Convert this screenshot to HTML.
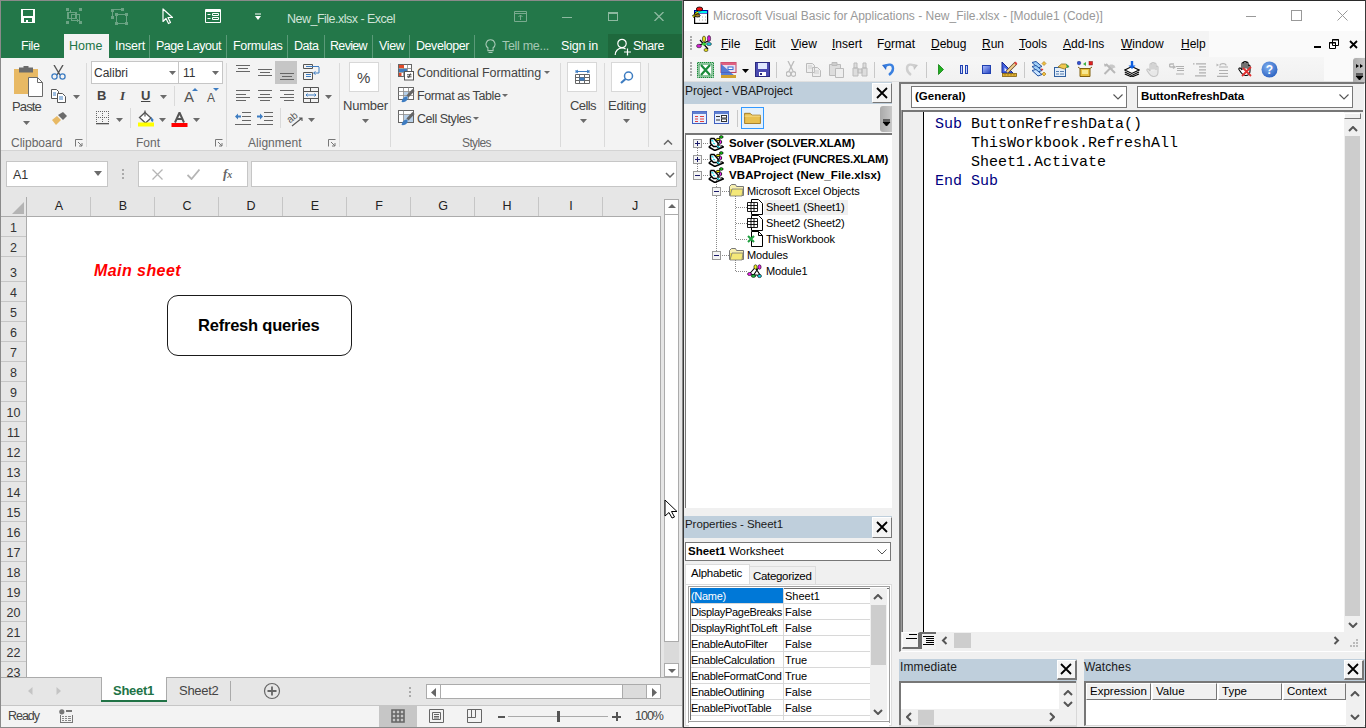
<!DOCTYPE html>
<html><head><meta charset="utf-8">
<style>
*{margin:0;padding:0;box-sizing:border-box}
html,body{width:1366px;height:728px;overflow:hidden;background:#8a8a8a;font-family:"Liberation Sans",sans-serif;font-size:12px;color:#262626}
.a{position:absolute}
.t{position:absolute;white-space:nowrap;line-height:1}
#xl{position:absolute;left:1px;top:1px;width:681px;height:726px;background:#f3f3f3;overflow:hidden}
#vba{position:absolute;left:684px;top:1px;width:682px;height:727px;background:#f0f0f0;overflow:hidden}
</style></head><body>
<div id="xl">
  <!-- green title + tabs -->
  <div class="a" style="left:0;top:0;width:681px;height:57px;background:#237749"></div>
  <div class="a" style="left:607px;top:33px;width:74px;height:24px;background:#1e683c"></div>
  <!-- QAT icons -->
  <svg class="a" style="left:20px;top:8px" width="14" height="14" viewBox="0 0 14 14" shape-rendering="crispEdges"><path d="M0 0h14v14h-14z" fill="#fff"/><path d="M2 1h10v6h-10z" fill="#237749"/><path d="M3 9h8v4h-8z" fill="#237749"/><path d="M5 11h2v2h-2z" fill="#fff"/></svg>
  <svg class="a" style="left:65px;top:7px" width="16" height="16" viewBox="0 0 16 16" shape-rendering="crispEdges"><g fill="#6aa383"><rect x="0" y="0" width="3" height="3"/><rect x="13" y="0" width="3" height="3"/><rect x="0" y="13" width="3" height="3"/><rect x="13" y="13" width="3" height="3"/></g><path d="M2 4.5h8v6h-8z M5.5 6.5h8v6h-8z M4.5 2v3 M11.5 11v3" fill="none" stroke="#6aa383" stroke-width="1.4"/></svg>
  <svg class="a" style="left:110px;top:7px" width="17" height="17" viewBox="0 0 17 17" shape-rendering="crispEdges"><g fill="#6aa383"><rect x="0" y="1" width="3" height="3"/><rect x="10" y="0" width="3" height="3"/><rect x="0" y="8" width="3" height="3"/><rect x="4" y="5" width="3" height="3"/><rect x="14" y="5" width="3" height="3"/><rect x="14" y="14" width="3" height="3"/><rect x="4" y="14" width="3" height="3"/></g><path d="M1.5 3v6 M2 1.5h9 M5.5 7v8 M6 6.5h9 M15.5 7v8 M6 15.5h9" fill="none" stroke="#6aa383" stroke-width="1.4"/></svg>
  <svg class="a" style="left:161px;top:7px" width="11" height="17" viewBox="0 0 11 17"><path d="M1 1v12.5l3-3 2.5 5 2-1-2.5-5h4.5z" fill="#237749" stroke="#fff" stroke-width="1.2" stroke-linejoin="round"/></svg>
  <svg class="a" style="left:204px;top:8px" width="17" height="15" viewBox="0 0 17 15"><path d="M0.5 0.5h15v13h-15z" fill="none" stroke="#fff"/><path d="M0.5 2h15" stroke="#fff" stroke-width="2"/><path d="M2.5 5.5h3 M2.5 9.5h3" stroke="#fff"/><path d="M7.5 4.5h6v2h-6z M7.5 8.5h6v2h-6z" fill="none" stroke="#fff"/></svg>
  <svg class="a" style="left:253px;top:12px" width="8" height="8" viewBox="0 0 8 8"><path d="M1 1h6" stroke="#fff"/><path d="M1 3h6l-3 4z" fill="#fff"/></svg>
  <div class="t" style="left:286px;top:12px;font-size:12.5px;color:#d0e3d8;letter-spacing:-0.513px">New_File.xlsx - Excel</div>
  <!-- window buttons -->
  <svg class="a" style="left:513px;top:10px" width="13" height="11" viewBox="0 0 13 11"><path d="M0.5 0.5h12v10h-12z M0.5 2.5h12" fill="none" stroke="#7aab8f"/><path d="M6.5 4v5 M4.5 6l2-2 2 2" fill="none" stroke="#7aab8f"/></svg>
  <div class="a" style="left:561px;top:16px;width:10px;height:1px;background:#8db9a0"></div>
  <div class="a" style="left:607px;top:11px;width:10px;height:9px;border:1px solid #8db9a0;border-top-width:2px"></div>
  <svg class="a" style="left:653px;top:11px" width="10" height="9" viewBox="0 0 10 9"><path d="M0.5 0l9 9 M9.5 0l-9 9" stroke="#8db9a0" stroke-width="1.3"/></svg>
  <!-- tabs -->
  <div class="a" style="left:63px;top:33px;width:45px;height:25px;background:#f3f3f3"></div>
  <div class="t" style="left:20px;top:39px;font-size:12.5px;color:#fff;letter-spacing:-0.414px">File</div>
  <div class="t" style="left:68px;top:39px;font-size:12.5px;color:#217346;letter-spacing:0.039px">Home</div>
  <div class="t" style="left:114px;top:39px;font-size:12.5px;color:#fff;letter-spacing:-0.211px">Insert</div>
  <div class="a" style="left:148px;top:34px;width:1px;height:23px;background:#5a9a78"></div>
  <div class="t" style="left:155px;top:39px;font-size:12.5px;color:#fff;letter-spacing:-0.473px">Page Layout</div>
  <div class="a" style="left:225px;top:34px;width:1px;height:23px;background:#5a9a78"></div>
  <div class="t" style="left:232px;top:39px;font-size:12.5px;color:#fff;letter-spacing:-0.324px">Formulas</div>
  <div class="a" style="left:286px;top:34px;width:1px;height:23px;background:#5a9a78"></div>
  <div class="t" style="left:293px;top:39px;font-size:12.5px;color:#fff;letter-spacing:-0.477px">Data</div>
  <div class="a" style="left:323px;top:34px;width:1px;height:23px;background:#5a9a78"></div>
  <div class="t" style="left:329px;top:39px;font-size:12.5px;color:#fff;letter-spacing:-0.667px">Review</div>
  <div class="a" style="left:371px;top:34px;width:1px;height:23px;background:#5a9a78"></div>
  <div class="t" style="left:378px;top:39px;font-size:12.5px;color:#fff;letter-spacing:-0.344px">View</div>
  <div class="a" style="left:408px;top:34px;width:1px;height:23px;background:#5a9a78"></div>
  <div class="t" style="left:415px;top:39px;font-size:12.5px;color:#fff;letter-spacing:-0.443px">Developer</div>
  <div class="a" style="left:473px;top:34px;width:1px;height:23px;background:#5a9a78"></div>
  <svg class="a" style="left:484px;top:38px" width="11" height="16" viewBox="0 0 11 16"><path d="M5.5 0.8a4.4 4.4 0 0 0-2.6 8v2.8h5.2v-2.8a4.4 4.4 0 0 0-2.6-8z M3.5 13.5h4" fill="none" stroke="#a6c8b5" stroke-width="1.1"/></svg>
  <div class="t" style="left:501px;top:39px;font-size:12.5px;color:#a6c8b5;letter-spacing:-0.302px">Tell me...</div>
  <div class="t" style="left:560px;top:39px;font-size:12.5px;color:#fff;letter-spacing:-0.176px">Sign in</div>
  <svg class="a" style="left:613px;top:37px" width="18" height="18" viewBox="0 0 18 18"><circle cx="8" cy="5.5" r="4.2" fill="none" stroke="#fff" stroke-width="1.2"/><path d="M1.2 17c0-4 3-7 6.8-7 1.4 0 2.6 0.3 3.6 1" fill="none" stroke="#fff" stroke-width="1.2"/><path d="M13.5 10.5v7 M10 14h7" stroke="#fff" stroke-width="1.2"/></svg>
  <div class="t" style="left:632px;top:39px;font-size:12.5px;color:#fff;letter-spacing:-0.472px">Share</div>

  <!-- ribbon -->
  <div class="a" style="left:0;top:57px;width:681px;height:92px;background:#f3f3f3"></div>
  <div class="a" style="left:0;top:149px;width:681px;height:1px;background:#d4d4d4"></div>
  <!-- clipboard -->
  <svg class="a" style="left:13px;top:65px" width="30" height="32" viewBox="0 0 30 32"><path d="M0 3h24v25h-24z" fill="#e8b964"/><path d="M5 1.5h14v5h-14z" fill="#6b6b6b"/><path d="M9.5 0h5v3h-5z" fill="#6b6b6b"/><path d="M14.5 11.5h9l5 5v14h-14z" fill="#fff" stroke="#6b6b6b"/><path d="M23.5 11.5v5h5" fill="none" stroke="#6b6b6b"/></svg>
  <div class="t" style="left:11px;top:99px;font-size:13px;color:#444;letter-spacing:-0.850px">Paste</div>
  <svg class="a" style="left:22px;top:120px" width="7" height="4"><path d="M0 0h7l-3.5 4z" fill="#6b6b6b"/></svg>
  <svg class="a" style="left:50px;top:64px" width="15" height="15" viewBox="0 0 15 15"><path d="M3 0l6 10 M12 0l-6 10" stroke="#555" stroke-width="1.4"/><circle cx="3.5" cy="11.5" r="2.6" fill="none" stroke="#3d7cc1" stroke-width="1.3"/><circle cx="11.5" cy="11.5" r="2.6" fill="none" stroke="#3d7cc1" stroke-width="1.3"/></svg>
  <svg class="a" style="left:50px;top:88px" width="15" height="14" viewBox="0 0 15 14"><path d="M0.5 0.5h5l2 2v7h-7z" fill="#fff" stroke="#555"/><path d="M6.5 4.5h5l3 3v6h-8z" fill="#fff" stroke="#555"/><path d="M8 8h4 M8 10h4 M2 4h3 M2 6h3" stroke="#3d7cc1"/></svg>
  <svg class="a" style="left:72px;top:94px" width="7" height="4"><path d="M0 0h7l-3.5 4z" fill="#6b6b6b"/></svg>
  <svg class="a" style="left:51px;top:111px" width="15" height="13" viewBox="0 0 15 13"><path d="M0 8l5-4 4 4-5 5z" fill="#e8b964"/><path d="M6 3l5-3 4 4-4 4z" fill="#6b6b6b"/></svg>
  <div class="t" style="left:10px;top:136px;font-size:12px;color:#666">Clipboard</div>
  <svg class="a" style="left:74px;top:138px" width="8" height="8" viewBox="0 0 8 8"><path d="M0.5 7.5v-7h7" fill="none" stroke="#777"/><path d="M3 3l4 4 M7 4v3h-3" fill="none" stroke="#777"/></svg>
  <div class="a" style="left:85px;top:62px;width:1px;height:84px;background:#dadada"></div>
  <!-- font -->
  <div class="a" style="left:90px;top:60px;width:88px;height:23px;background:#fff;border:1px solid #c6c6c6"></div>
  <div class="t" style="left:93px;top:66px;font-size:12px;color:#333;letter-spacing:-0.002px">Calibri</div>
  <svg class="a" style="left:168px;top:70px" width="7" height="4"><path d="M0 0h7l-3.5 4z" fill="#6b6b6b"/></svg>
  <div class="a" style="left:177px;top:60px;width:45px;height:23px;background:#fff;border:1px solid #c6c6c6"></div>
  <div class="t" style="left:182px;top:66px;font-size:12px;color:#333">11</div>
  <svg class="a" style="left:211px;top:70px" width="7" height="4"><path d="M0 0h7l-3.5 4z" fill="#6b6b6b"/></svg>
  <div class="t" style="left:96px;top:88px;font-size:13px;font-weight:bold;color:#444">B</div>
  <div class="t" style="left:119px;top:88px;font-size:13px;font-style:italic;font-family:'Liberation Serif';font-weight:bold;color:#444">I</div>
  <div class="t" style="left:140px;top:88px;font-size:13px;font-weight:bold;color:#444;text-decoration:underline">U</div>
  <svg class="a" style="left:159px;top:94px" width="7" height="4"><path d="M0 0h7l-3.5 4z" fill="#6b6b6b"/></svg>
  <div class="a" style="left:173px;top:85px;width:1px;height:20px;background:#dadada"></div>
  <div class="t" style="left:183px;top:88px;font-size:15px;color:#555">A</div>
  <svg class="a" style="left:191px;top:87px" width="6" height="3"><path d="M0 3h6l-3-3z" fill="#3d7cc1"/></svg>
  <div class="t" style="left:206px;top:91px;font-size:12px;color:#555">A</div>
  <svg class="a" style="left:212px;top:87px" width="6" height="3"><path d="M0 0h6l-3 3z" fill="#3d7cc1"/></svg>
  <svg class="a" style="left:95px;top:110px" width="14" height="14" viewBox="0 0 14 14"><g fill="#666"><rect x="0" y="0" width="1" height="1"/><rect x="2" y="0" width="1" height="1"/><rect x="4" y="0" width="1" height="1"/><rect x="6" y="0" width="1" height="1"/><rect x="8" y="0" width="1" height="1"/><rect x="10" y="0" width="1" height="1"/><rect x="12" y="0" width="1" height="1"/><rect x="0" y="6" width="1" height="1"/><rect x="2" y="6" width="1" height="1"/><rect x="4" y="6" width="1" height="1"/><rect x="6" y="6" width="1" height="1"/><rect x="8" y="6" width="1" height="1"/><rect x="10" y="6" width="1" height="1"/><rect x="12" y="6" width="1" height="1"/><rect x="0" y="2" width="1" height="1"/><rect x="0" y="4" width="1" height="1"/><rect x="0" y="8" width="1" height="1"/><rect x="0" y="10" width="1" height="1"/><rect x="6" y="2" width="1" height="1"/><rect x="6" y="4" width="1" height="1"/><rect x="6" y="8" width="1" height="1"/><rect x="6" y="10" width="1" height="1"/><rect x="12" y="2" width="1" height="1"/><rect x="12" y="4" width="1" height="1"/><rect x="12" y="8" width="1" height="1"/><rect x="12" y="10" width="1" height="1"/></g><rect x="0" y="12" width="13" height="1.3" fill="#555"/></svg>
  <svg class="a" style="left:115px;top:117px" width="7" height="4"><path d="M0 0h7l-3.5 4z" fill="#6b6b6b"/></svg>
  <div class="a" style="left:129px;top:107px;width:1px;height:20px;background:#dadada"></div>
  <svg class="a" style="left:137px;top:109px" width="17" height="18" viewBox="0 0 17 18"><path d="M7 2.5l6 5.5-5.5 5-6-5.5z" fill="#fff" stroke="#555" stroke-width="1.3"/><path d="M7 0.5v6" stroke="#555" stroke-width="1.2"/><path d="M13 7l2.5 2.5-0.5 2.5-2-1z" fill="#3d7cc1"/><rect x="0" y="12.5" width="16" height="4" fill="#ffff00"/></svg>
  <svg class="a" style="left:158px;top:117px" width="7" height="4"><path d="M0 0h7l-3.5 4z" fill="#6b6b6b"/></svg>
  <svg class="a" style="left:170px;top:111px" width="17" height="16" viewBox="0 0 17 16"><path d="M4 10.5l4.5-10 4.5 10 M5.5 7h6" fill="none" stroke="#555" stroke-width="2"/><rect x="0.5" y="11" width="16" height="4" fill="#ff0000"/></svg>
  <svg class="a" style="left:192px;top:117px" width="7" height="4"><path d="M0 0h7l-3.5 4z" fill="#6b6b6b"/></svg>
  <div class="t" style="left:135px;top:136px;font-size:12px;color:#666;letter-spacing:-0.004px">Font</div>
  <svg class="a" style="left:214px;top:138px" width="8" height="8" viewBox="0 0 8 8"><path d="M0.5 7.5v-7h7" fill="none" stroke="#777"/><path d="M3 3l4 4 M7 4v3h-3" fill="none" stroke="#777"/></svg>
  <div class="a" style="left:225px;top:62px;width:1px;height:84px;background:#dadada"></div>
  <!-- alignment -->
  <svg class="a" style="left:235px;top:64px" width="15" height="8"><path d="M0 0.5h14 M2 3.5h10 M0 6.5h14" stroke="#666"/></svg>
  <svg class="a" style="left:257px;top:68px" width="15" height="8"><path d="M0 0.5h14 M2 3.5h10 M0 6.5h14" stroke="#666"/></svg>
  <div class="a" style="left:274px;top:60px;width:22px;height:23px;background:#c6c6c6"></div>
  <svg class="a" style="left:279px;top:72px" width="15" height="8"><path d="M0 0.5h14 M2 3.5h10 M0 6.5h14" stroke="#666"/></svg>
  <svg class="a" style="left:302px;top:63px" width="18" height="17" viewBox="0 0 18 17"><path d="M0.5 0.5h9v4h-9z M0.5 8.5h9v7h-9z" fill="none" stroke="#555"/><path d="M3 2.5h13 M3 10.5h5 M3 12.5h5" stroke="#3d7cc1"/><path d="M16 3v6h-5 M12.5 7.5l-2 1.5 2 1.5" fill="none" stroke="#3d7cc1"/></svg>
  <svg class="a" style="left:234px;top:88px" width="16" height="13"><path d="M1 1.5h14 M1 5.5h10 M1 8.5h14 M1 11.5h10" stroke="#666"/></svg>
  <svg class="a" style="left:256px;top:88px" width="16" height="13"><path d="M1 1.5h14 M3 5.5h10 M1 8.5h14 M3 11.5h10" stroke="#666"/></svg>
  <svg class="a" style="left:278px;top:88px" width="16" height="13"><path d="M1 1.5h14 M5 5.5h10 M1 8.5h14 M5 11.5h10" stroke="#666"/></svg>
  <svg class="a" style="left:302px;top:86px" width="17" height="16" viewBox="0 0 17 16"><path d="M0.5 0.5h15v15h-15z M0.5 4.5h15 M0.5 11.5h15 M7.5 0.5v4 M7.5 11.5v4" fill="none" stroke="#555"/><path d="M3 8h10 M4.5 6.5l-1.5 1.5 1.5 1.5 M11.5 6.5l1.5 1.5-1.5 1.5" fill="none" stroke="#3d7cc1"/></svg>
  <svg class="a" style="left:324px;top:94px" width="7" height="4"><path d="M0 0h7l-3.5 4z" fill="#6b6b6b"/></svg>
  <svg class="a" style="left:233px;top:110px" width="18" height="15" viewBox="0 0 18 15"><path d="M8 1.5h9 M8 5.5h9 M8 9.5h9 M1 13.5h16" stroke="#666"/><path d="M1 5.5l3-3v2h3v2h-3v2z" fill="#3d7cc1"/></svg>
  <svg class="a" style="left:255px;top:110px" width="18" height="15" viewBox="0 0 18 15"><path d="M8 1.5h9 M8 5.5h9 M8 9.5h9 M1 13.5h16" stroke="#666"/><path d="M7 5.5l-3-3v2h-3v2h3v2z" fill="#3d7cc1"/></svg>
  <div class="a" style="left:279px;top:107px;width:1px;height:20px;background:#dadada"></div>
  <svg class="a" style="left:286px;top:109px" width="18" height="17" viewBox="0 0 18 17"><text x="0" y="11" font-size="10" font-family="Liberation Sans" fill="#555" transform="rotate(-40 5 8)">ab</text><path d="M5 16l10-8 M12 8h3v3" fill="none" stroke="#555" stroke-width="1.1"/></svg>
  <svg class="a" style="left:307px;top:117px" width="7" height="4"><path d="M0 0h7l-3.5 4z" fill="#6b6b6b"/></svg>
  <div class="t" style="left:247px;top:136px;font-size:12px;color:#666;letter-spacing:0.014px">Alignment</div>
  <svg class="a" style="left:327px;top:138px" width="8" height="8" viewBox="0 0 8 8"><path d="M0.5 7.5v-7h7" fill="none" stroke="#777"/><path d="M3 3l4 4 M7 4v3h-3" fill="none" stroke="#777"/></svg>
  <div class="a" style="left:338px;top:62px;width:1px;height:84px;background:#dadada"></div>
  <!-- number -->
  <div class="a" style="left:348px;top:61px;width:30px;height:30px;background:#fff;border:1px solid #d8d8d8"></div>
  <div class="t" style="left:356px;top:69px;font-size:15px;color:#444">%</div>
  <div class="t" style="left:342px;top:98px;font-size:13px;color:#444;letter-spacing:-0.208px">Number</div>
  <svg class="a" style="left:361px;top:118px" width="7" height="4"><path d="M0 0h7l-3.5 4z" fill="#6b6b6b"/></svg>
  <div class="a" style="left:389px;top:62px;width:1px;height:84px;background:#dadada"></div>
  <!-- styles -->
  <svg class="a" style="left:397px;top:63px" width="17" height="17" viewBox="0 0 17 17"><rect x="0.5" y="0.5" width="13" height="12" fill="#fff" stroke="#666"/><path d="M0.5 4.5h13 M0.5 8.5h13 M5.5 0.5v12 M9.5 0.5v12" stroke="#888" stroke-width="0.8"/><rect x="1" y="1" width="5" height="3" fill="#e04a2a"/><rect x="1" y="5" width="8" height="3" fill="#3d7cc1"/><rect x="1" y="9" width="2.5" height="3" fill="#e04a2a"/><rect x="6.5" y="7.5" width="9" height="8.5" fill="#fff" stroke="#555"/><path d="M9 10.8h4.5 M9 12.8h4.5 M12.5 9.5l-2 4.5" stroke="#333" stroke-width="0.9"/></svg>
  <div class="t" style="left:416px;top:66px;font-size:12.5px;color:#444;letter-spacing:-0.080px">Conditional Formatting</div>
  <svg class="a" style="left:543px;top:70px" width="6" height="3"><path d="M0 0h6l-3 3z" fill="#6b6b6b"/></svg>
  <svg class="a" style="left:397px;top:86px" width="17" height="17" viewBox="0 0 17 17"><rect x="0.5" y="0.5" width="15" height="12" fill="#fff" stroke="#666"/><path d="M0.5 4.5h15 M0.5 8.5h15 M5.5 0.5v12 M10.5 0.5v12" stroke="#888" stroke-width="0.8"/><rect x="6" y="5" width="4" height="3" fill="#b7cfe7"/><rect x="6" y="9" width="4" height="3" fill="#b7cfe7"/><path d="M15.5 3l-6 6.5" stroke="#666" stroke-width="3"/><path d="M9.5 9.5c-2-0.5-4 1-5 2.5l-1 3c2 0.5 5-0.5 6-2.5z" fill="#3d7cc1"/></svg>
  <div class="t" style="left:416px;top:89px;font-size:12.5px;color:#444;letter-spacing:-0.394px">Format as Table</div>
  <svg class="a" style="left:501px;top:93px" width="6" height="3"><path d="M0 0h6l-3 3z" fill="#6b6b6b"/></svg>
  <svg class="a" style="left:397px;top:109px" width="17" height="17" viewBox="0 0 17 17"><rect x="0.5" y="0.5" width="15" height="12" fill="#fff" stroke="#666"/><path d="M0.5 4.5h15 M5.5 0.5v12" stroke="#888" stroke-width="0.8"/><rect x="6" y="5" width="9" height="7" fill="#b7cfe7"/><path d="M15.5 3l-6 6.5" stroke="#666" stroke-width="3"/><path d="M9.5 9.5c-2-0.5-4 1-5 2.5l-1 3c2 0.5 5-0.5 6-2.5z" fill="#3d7cc1"/></svg>
  <div class="t" style="left:416px;top:112px;font-size:12.5px;color:#444;letter-spacing:-0.459px">Cell Styles</div>
  <svg class="a" style="left:472px;top:116px" width="6" height="3"><path d="M0 0h6l-3 3z" fill="#6b6b6b"/></svg>
  <div class="t" style="left:461px;top:136px;font-size:12px;color:#666;letter-spacing:-0.615px">Styles</div>
  <div class="a" style="left:559px;top:62px;width:1px;height:84px;background:#dadada"></div>
  <!-- cells -->
  <div class="a" style="left:566px;top:61px;width:30px;height:30px;background:#fff;border:1px solid #d8d8d8"></div>
  <svg class="a" style="left:574px;top:68px" width="15" height="16" viewBox="0 0 15 16"><path d="M1 2.5h13 M1 1v3 M14 1v3 M3 1l-2 1.5 2 1.5 M12 1l2 1.5-2 1.5" fill="none" stroke="#3d7cc1"/><path d="M0.5 5.5h14v9h-14z M0.5 8.5h14 M0.5 11.5h14 M4.5 5.5v9 M9.5 5.5v9" fill="none" stroke="#666"/><rect x="4.5" y="8.5" width="5" height="3" fill="#3d7cc1"/></svg>
  <div class="t" style="left:569px;top:98px;font-size:13px;color:#444;letter-spacing:-0.581px">Cells</div>
  <svg class="a" style="left:579px;top:118px" width="7" height="4"><path d="M0 0h7l-3.5 4z" fill="#6b6b6b"/></svg>
  <div class="a" style="left:603px;top:62px;width:1px;height:84px;background:#dadada"></div>
  <!-- editing -->
  <div class="a" style="left:610px;top:61px;width:30px;height:30px;background:#fff;border:1px solid #d8d8d8"></div>
  <svg class="a" style="left:619px;top:70px" width="14" height="13" viewBox="0 0 14 13"><circle cx="8.5" cy="5" r="4" fill="none" stroke="#3d7cc1" stroke-width="1.5"/><path d="M5.5 8l-4.5 4" stroke="#3d7cc1" stroke-width="2.2"/></svg>
  <div class="t" style="left:607px;top:98px;font-size:13px;color:#444;letter-spacing:-0.250px">Editing</div>
  <svg class="a" style="left:622px;top:118px" width="7" height="4"><path d="M0 0h7l-3.5 4z" fill="#6b6b6b"/></svg>
  <div class="a" style="left:647px;top:62px;width:1px;height:84px;background:#dadada"></div>
  <svg class="a" style="left:662px;top:138px" width="10" height="6"><path d="M1 5.5l4-4 4 4" fill="none" stroke="#666" stroke-width="1.5"/></svg>

  <!-- formula bar area -->
  <div class="a" style="left:0;top:150px;width:681px;height:46px;background:#e6e6e6"></div>
  <div class="a" style="left:5px;top:160px;width:102px;height:26px;background:#fff;border:1px solid #c6c6c6"></div>
  <div class="t" style="left:12px;top:168px;font-size:12.5px;color:#333">A1</div>
  <svg class="a" style="left:93px;top:170px" width="8" height="5"><path d="M0 0h8l-4 5z" fill="#6b6b6b"/></svg>
  <div class="a" style="left:121px;top:168px;width:2px;height:2px;background:#aaa"></div>
  <div class="a" style="left:121px;top:172px;width:2px;height:2px;background:#aaa"></div>
  <div class="a" style="left:121px;top:176px;width:2px;height:2px;background:#aaa"></div>
  <div class="a" style="left:137px;top:160px;width:110px;height:26px;background:#fff;border:1px solid #c6c6c6"></div>
  <svg class="a" style="left:151px;top:168px" width="11" height="11"><path d="M0.5 0.5l10 10 M10.5 0.5l-10 10" stroke="#b5b5b5" stroke-width="1.3"/></svg>
  <svg class="a" style="left:186px;top:168px" width="13" height="11"><path d="M0.5 6l4 4 8-9.5" fill="none" stroke="#b5b5b5" stroke-width="1.8"/></svg>
  <div class="t" style="left:222px;top:166px;font-size:13px;color:#666;font-family:'Liberation Serif';font-style:italic;font-weight:bold">f<span style="font-size:10px">x</span></div>
  <div class="a" style="left:250px;top:160px;width:426px;height:26px;background:#fff;border:1px solid #c6c6c6"></div>
  <svg class="a" style="left:664px;top:171px" width="10" height="6"><path d="M1 1l4 4 4-4" fill="none" stroke="#666" stroke-width="1.5"/></svg>

  <!-- column headers -->
  <div class="a" style="left:0;top:196px;width:681px;height:20px;background:#e6e6e6"></div>
  <svg class="a" style="left:11px;top:201px" width="12" height="12"><path d="M12 0v12h-12z" fill="#b4b4b4"/></svg>
  <div class="a" style="left:0;top:215px;width:660px;height:1px;background:#ababab"></div>
  <div class="a" style="left:89px;top:196px;width:1px;height:19px;background:#c6c6c6"></div>
<div class="t" style="left:26px;top:199px;width:64px;text-align:center;font-size:12.5px;color:#222">A</div>
<div class="a" style="left:153px;top:196px;width:1px;height:19px;background:#c6c6c6"></div>
<div class="t" style="left:90px;top:199px;width:64px;text-align:center;font-size:12.5px;color:#222">B</div>
<div class="a" style="left:217px;top:196px;width:1px;height:19px;background:#c6c6c6"></div>
<div class="t" style="left:154px;top:199px;width:64px;text-align:center;font-size:12.5px;color:#222">C</div>
<div class="a" style="left:281px;top:196px;width:1px;height:19px;background:#c6c6c6"></div>
<div class="t" style="left:218px;top:199px;width:64px;text-align:center;font-size:12.5px;color:#222">D</div>
<div class="a" style="left:345px;top:196px;width:1px;height:19px;background:#c6c6c6"></div>
<div class="t" style="left:282px;top:199px;width:64px;text-align:center;font-size:12.5px;color:#222">E</div>
<div class="a" style="left:409px;top:196px;width:1px;height:19px;background:#c6c6c6"></div>
<div class="t" style="left:346px;top:199px;width:64px;text-align:center;font-size:12.5px;color:#222">F</div>
<div class="a" style="left:473px;top:196px;width:1px;height:19px;background:#c6c6c6"></div>
<div class="t" style="left:410px;top:199px;width:64px;text-align:center;font-size:12.5px;color:#222">G</div>
<div class="a" style="left:537px;top:196px;width:1px;height:19px;background:#c6c6c6"></div>
<div class="t" style="left:474px;top:199px;width:64px;text-align:center;font-size:12.5px;color:#222">H</div>
<div class="a" style="left:601px;top:196px;width:1px;height:19px;background:#c6c6c6"></div>
<div class="t" style="left:538px;top:199px;width:64px;text-align:center;font-size:12.5px;color:#222">I</div>
<div class="a" style="left:665px;top:196px;width:1px;height:19px;background:#c6c6c6"></div>
<div class="t" style="left:602px;top:199px;width:64px;text-align:center;font-size:12.5px;color:#222">J</div>
  <!-- row header & cells -->
  <div class="a" style="left:0;top:216px;width:25px;height:461px;background:#e6e6e6"></div>
  <div class="a" style="left:25px;top:196px;width:1px;height:481px;background:#ababab"></div>
  <div class="a" style="left:26px;top:216px;width:634px;height:461px;background:#fff"></div>
  <div class="a" style="left:659px;top:216px;width:1px;height:461px;background:#ababab"></div>
  <div class="a" style="left:0;top:235px;width:25px;height:1px;background:#c6c6c6"></div>
<div class="t" style="left:0;top:221px;width:25px;text-align:center;font-size:12.5px;color:#333">1</div>
<div class="a" style="left:0;top:255px;width:25px;height:1px;background:#c6c6c6"></div>
<div class="t" style="left:0;top:241px;width:25px;text-align:center;font-size:12.5px;color:#333">2</div>
<div class="a" style="left:0;top:280px;width:25px;height:1px;background:#c6c6c6"></div>
<div class="t" style="left:0;top:266px;width:25px;text-align:center;font-size:12.5px;color:#333">3</div>
<div class="a" style="left:0;top:300px;width:25px;height:1px;background:#c6c6c6"></div>
<div class="t" style="left:0;top:286px;width:25px;text-align:center;font-size:12.5px;color:#333">4</div>
<div class="a" style="left:0;top:320px;width:25px;height:1px;background:#c6c6c6"></div>
<div class="t" style="left:0;top:306px;width:25px;text-align:center;font-size:12.5px;color:#333">5</div>
<div class="a" style="left:0;top:340px;width:25px;height:1px;background:#c6c6c6"></div>
<div class="t" style="left:0;top:326px;width:25px;text-align:center;font-size:12.5px;color:#333">6</div>
<div class="a" style="left:0;top:360px;width:25px;height:1px;background:#c6c6c6"></div>
<div class="t" style="left:0;top:346px;width:25px;text-align:center;font-size:12.5px;color:#333">7</div>
<div class="a" style="left:0;top:380px;width:25px;height:1px;background:#c6c6c6"></div>
<div class="t" style="left:0;top:366px;width:25px;text-align:center;font-size:12.5px;color:#333">8</div>
<div class="a" style="left:0;top:400px;width:25px;height:1px;background:#c6c6c6"></div>
<div class="t" style="left:0;top:386px;width:25px;text-align:center;font-size:12.5px;color:#333">9</div>
<div class="a" style="left:0;top:420px;width:25px;height:1px;background:#c6c6c6"></div>
<div class="t" style="left:0;top:406px;width:25px;text-align:center;font-size:12.5px;color:#333">10</div>
<div class="a" style="left:0;top:440px;width:25px;height:1px;background:#c6c6c6"></div>
<div class="t" style="left:0;top:426px;width:25px;text-align:center;font-size:12.5px;color:#333">11</div>
<div class="a" style="left:0;top:460px;width:25px;height:1px;background:#c6c6c6"></div>
<div class="t" style="left:0;top:446px;width:25px;text-align:center;font-size:12.5px;color:#333">12</div>
<div class="a" style="left:0;top:480px;width:25px;height:1px;background:#c6c6c6"></div>
<div class="t" style="left:0;top:466px;width:25px;text-align:center;font-size:12.5px;color:#333">13</div>
<div class="a" style="left:0;top:500px;width:25px;height:1px;background:#c6c6c6"></div>
<div class="t" style="left:0;top:486px;width:25px;text-align:center;font-size:12.5px;color:#333">14</div>
<div class="a" style="left:0;top:520px;width:25px;height:1px;background:#c6c6c6"></div>
<div class="t" style="left:0;top:506px;width:25px;text-align:center;font-size:12.5px;color:#333">15</div>
<div class="a" style="left:0;top:540px;width:25px;height:1px;background:#c6c6c6"></div>
<div class="t" style="left:0;top:526px;width:25px;text-align:center;font-size:12.5px;color:#333">16</div>
<div class="a" style="left:0;top:560px;width:25px;height:1px;background:#c6c6c6"></div>
<div class="t" style="left:0;top:546px;width:25px;text-align:center;font-size:12.5px;color:#333">17</div>
<div class="a" style="left:0;top:580px;width:25px;height:1px;background:#c6c6c6"></div>
<div class="t" style="left:0;top:566px;width:25px;text-align:center;font-size:12.5px;color:#333">18</div>
<div class="a" style="left:0;top:600px;width:25px;height:1px;background:#c6c6c6"></div>
<div class="t" style="left:0;top:586px;width:25px;text-align:center;font-size:12.5px;color:#333">19</div>
<div class="a" style="left:0;top:620px;width:25px;height:1px;background:#c6c6c6"></div>
<div class="t" style="left:0;top:606px;width:25px;text-align:center;font-size:12.5px;color:#333">20</div>
<div class="a" style="left:0;top:640px;width:25px;height:1px;background:#c6c6c6"></div>
<div class="t" style="left:0;top:626px;width:25px;text-align:center;font-size:12.5px;color:#333">21</div>
<div class="a" style="left:0;top:660px;width:25px;height:1px;background:#c6c6c6"></div>
<div class="t" style="left:0;top:646px;width:25px;text-align:center;font-size:12.5px;color:#333">22</div>
<div class="a" style="left:0;top:680px;width:25px;height:1px;background:#c6c6c6"></div>
<div class="t" style="left:0;top:666px;width:25px;text-align:center;font-size:12.5px;color:#333">23</div>
  <div class="t" style="left:93px;top:262px;font-size:16px;font-weight:bold;font-style:italic;color:#ff0000;letter-spacing:0.431px">Main sheet</div>
  <div class="a" style="left:166px;top:294px;width:185px;height:61px;border:1px solid #1a1a1a;border-radius:11px;background:#fff"></div>
  <div class="t" style="left:197px;top:316px;font-size:16.5px;font-weight:bold;color:#000;letter-spacing:-0.215px">Refresh queries</div>
  <!-- vertical scrollbar -->
  <div class="a" style="left:660px;top:196px;width:21px;height:481px;background:#e6e6e6"></div>
  <div class="a" style="left:663px;top:198px;width:15px;height:16px;background:#fff;border:1px solid #ababab"></div>
  <svg class="a" style="left:667px;top:203px" width="8" height="4"><path d="M0 4h8l-4-4z" fill="#666"/></svg>
  <div class="a" style="left:663px;top:213px;width:15px;height:428px;background:#fff;border:1px solid #ababab"></div>
  <div class="a" style="left:663px;top:641px;width:15px;height:21px;background:#dadada"></div>
  <div class="a" style="left:663px;top:662px;width:15px;height:14px;background:#fff;border:1px solid #ababab"></div>
  <svg class="a" style="left:667px;top:668px" width="8" height="4"><path d="M0 0h8l-4 4z" fill="#666"/></svg>
  <!-- sheet tab bar -->
  <div class="a" style="left:0;top:676px;width:681px;height:1px;background:#ababab"></div>
  <div class="a" style="left:0;top:677px;width:681px;height:27px;background:#e6e6e6"></div>
  <svg class="a" style="left:27px;top:686px" width="5" height="8"><path d="M4.5 0v8l-4.5-4z" fill="#c4c4c4"/></svg>
  <svg class="a" style="left:55px;top:686px" width="5" height="8"><path d="M0.5 0v8l4.5-4z" fill="#c4c4c4"/></svg>
  <div class="a" style="left:100px;top:676px;width:66px;height:25px;background:#fff;border-left:1px solid #ababab;border-right:1px solid #ababab"></div>
  <div class="a" style="left:100px;top:699px;width:66px;height:2px;background:#217346"></div>
  <div class="t" style="left:112px;top:683px;font-size:13px;font-weight:bold;color:#217346;letter-spacing:-0.273px">Sheet1</div>
  <div class="t" style="left:178px;top:683px;font-size:13px;color:#444;letter-spacing:-0.284px">Sheet2</div>
  <div class="a" style="left:229px;top:680px;width:1px;height:20px;background:#aaa"></div>
  <svg class="a" style="left:262px;top:681px" width="18" height="18" viewBox="0 0 18 18"><circle cx="9" cy="9" r="7.5" fill="none" stroke="#666" stroke-width="1.2"/><path d="M9 4.5v9 M4.5 9h9" stroke="#666" stroke-width="1.8"/></svg>
  <div class="a" style="left:408px;top:686px;width:2px;height:2px;background:#aaa"></div>
  <div class="a" style="left:408px;top:690px;width:2px;height:2px;background:#aaa"></div>
  <div class="a" style="left:408px;top:694px;width:2px;height:2px;background:#aaa"></div>
  <div class="a" style="left:425px;top:683px;width:235px;height:15px;background:#fff;border:1px solid #ababab"></div>
  <div class="a" style="left:439px;top:684px;width:1px;height:14px;background:#ababab"></div>
  <div class="a" style="left:621px;top:684px;width:24px;height:13px;background:#dcdcdc;border-left:1px solid #ababab"></div>
  <div class="a" style="left:645px;top:684px;width:1px;height:13px;background:#ababab"></div>
  <svg class="a" style="left:430px;top:687px" width="5" height="9"><path d="M5 0v9l-5-4.5z" fill="#666"/></svg>
  <svg class="a" style="left:651px;top:687px" width="5" height="9"><path d="M0 0v9l5-4.5z" fill="#666"/></svg>
  <!-- status bar -->
  <div class="a" style="left:0;top:704px;width:681px;height:1px;background:#c6c6c6"></div>
  <div class="a" style="left:0;top:705px;width:681px;height:21px;background:#f3f3f3"></div>
  <div class="t" style="left:7px;top:709px;font-size:12.5px;color:#444;letter-spacing:-1.028px">Ready</div>
  <svg class="a" style="left:58px;top:708px" width="14" height="14" viewBox="0 0 14 14" shape-rendering="crispEdges"><circle cx="2.8" cy="2.8" r="2.6" fill="#777" shape-rendering="auto"/><rect x="7" y="1" width="6" height="2" fill="#777"/><path d="M1.5 6v7.5h12v-8" fill="none" stroke="#777"/><g fill="#888"><rect x="3" y="7" width="2" height="1"/><rect x="6" y="7" width="2" height="1"/><rect x="9" y="7" width="3" height="1"/><rect x="3" y="9" width="2" height="1"/><rect x="6" y="9" width="2" height="1"/><rect x="9" y="9" width="3" height="1"/><rect x="3" y="11" width="2" height="1"/><rect x="6" y="11" width="2" height="1"/><rect x="9" y="11" width="3" height="1"/></g></svg>
  <div class="a" style="left:378px;top:705px;width:38px;height:21px;background:#c6c6c6"></div>
  <svg class="a" style="left:390px;top:708px" width="14" height="14" viewBox="0 0 14 14"><path d="M1 1h12v12h-12z M1 5h12 M1 9h12 M5 1v12 M9 1v12" fill="none" stroke="#666" stroke-width="1.6"/></svg>
  <svg class="a" style="left:428px;top:708px" width="15" height="14" viewBox="0 0 15 14"><path d="M0.5 0.5h14v13h-14z M3.5 3.5h8v7h-8z" fill="none" stroke="#666"/><path d="M5 5.5h5 M5 7.5h5 M5 9h5" stroke="#666"/></svg>
  <svg class="a" style="left:466px;top:708px" width="15" height="14" viewBox="0 0 15 14"><path d="M0.5 0.5h14v13h-14z M0.5 8.5h8v-8 M4.5 0.5v8" fill="none" stroke="#666"/></svg>
  <div class="a" style="left:497px;top:715px;width:7px;height:2px;background:#555"></div>
  <div class="a" style="left:507px;top:715px;width:100px;height:1px;background:#aaa"></div>
  <div class="a" style="left:556px;top:710px;width:3px;height:11px;background:#555"></div>
  <div class="a" style="left:611px;top:715px;width:9px;height:2px;background:#555"></div>
  <div class="a" style="left:614.5px;top:711px;width:2px;height:9px;background:#555"></div>
  <div class="t" style="left:634px;top:709px;font-size:12.5px;color:#444;letter-spacing:-0.996px">100%</div>
</div>
<div id="vba">
  <!-- title bar -->
  <div class="a" style="left:0;top:0;width:682px;height:30px;background:#fff"></div>
  <svg class="a" style="left:8px;top:5px" width="17" height="18" viewBox="0 0 17 18"><rect x="2.6" y="4.6" width="13" height="12.8" fill="#fff" stroke="#000" stroke-width="1.2"/><rect x="2" y="4" width="14" height="3.6" fill="#0000a0"/><rect x="3" y="5" width="12" height="2" fill="#00f0f0"/><path d="M7 11h1 M10 11h1 M13 11h1 M7 14h1 M10 14h1 M13 14h1" stroke="#aaa"/><ellipse cx="7.5" cy="3" rx="3.2" ry="2" fill="#f01010" stroke="#000" stroke-width="0.8"/><path d="M0.8 10.5l2-1 1.5-2.5 2-0.5" fill="none" stroke="#000" stroke-width="2.6"/><path d="M0.8 10.5l2-1 1.5-2.5 2-0.5" fill="none" stroke="#f0f000" stroke-width="1.3"/><ellipse cx="5.5" cy="9.5" rx="2.6" ry="1.5" fill="#a08020" stroke="#000" stroke-width="0.8"/></svg>
  <div class="t" style="left:29px;top:9px;font-size:12px;color:#999">Microsoft Visual Basic for Applications - New_File.xlsx - [Module1 (Code)]</div>
  <div class="a" style="left:562px;top:15px;width:10px;height:1px;background:#999"></div>
  <div class="a" style="left:607px;top:9px;width:11px;height:11px;border:1px solid #999"></div>
  <svg class="a" style="left:653px;top:9px" width="11" height="11"><path d="M0.5 0.5l10 10 M10.5 0.5l-10 10" stroke="#999"/></svg>
  <!-- menu bar -->
  <div class="a" style="left:0;top:30px;width:682px;height:26px;background:#f4f4f4"></div>
  <div class="a" style="left:525px;top:30px;width:157px;height:26px;background:#fafafa"></div>
  <div class="a" style="left:6px;top:35px;width:2px;height:2px;background:#aaa;box-shadow:0 3px #aaa,0 6px #aaa,0 9px #aaa,0 12px #aaa"></div>
  <svg class="a" style="left:11px;top:34px" width="18" height="18" viewBox="0 0 18 18"><path d="M3 11l12-6 M5 5l8 9" stroke="#000" stroke-width="1.2"/><ellipse cx="4" cy="11" rx="2.5" ry="1.8" fill="#d020d0" stroke="#000" stroke-width="0.5"/><ellipse cx="9" cy="4" rx="1.6" ry="3" fill="#e8e020" stroke="#000" stroke-width="0.5"/><ellipse cx="14" cy="3.5" rx="1.6" ry="3" fill="#d020d0" stroke="#000" stroke-width="0.5"/><ellipse cx="9" cy="9" rx="2" ry="1.5" fill="#30d030"/><ellipse cx="14" cy="9" rx="2.5" ry="1.5" fill="#20c8e0" stroke="#000" stroke-width="0.5"/><ellipse cx="11" cy="15" rx="2" ry="1.5" fill="#e8e020" stroke="#000" stroke-width="0.5"/></svg>
  <div class="t" style="left:37px;top:37px;font-size:12px;color:#000"><u>F</u>ile</div>
<div class="t" style="left:71px;top:37px;font-size:12px;color:#000"><u>E</u>dit</div>
<div class="t" style="left:107px;top:37px;font-size:12px;color:#000"><u>V</u>iew</div>
<div class="t" style="left:148px;top:37px;font-size:12px;color:#000"><u>I</u>nsert</div>
<div class="t" style="left:193px;top:37px;font-size:12px;color:#000">F<u>o</u>rmat</div>
<div class="t" style="left:247px;top:37px;font-size:12px;color:#000"><u>D</u>ebug</div>
<div class="t" style="left:298px;top:37px;font-size:12px;color:#000"><u>R</u>un</div>
<div class="t" style="left:335px;top:37px;font-size:12px;color:#000"><u>T</u>ools</div>
<div class="t" style="left:379px;top:37px;font-size:12px;color:#000"><u>A</u>dd-Ins</div>
<div class="t" style="left:437px;top:37px;font-size:12px;color:#000"><u>W</u>indow</div>
<div class="t" style="left:497px;top:37px;font-size:12px;color:#000"><u>H</u>elp</div>
  <!-- MDI buttons -->
  <div class="a" style="left:630px;top:45px;width:7px;height:2px;background:#000"></div>
  <svg class="a" style="left:645px;top:38px" width="10" height="10" viewBox="0 0 10 10"><path d="M3.5 0.5h6v6h-6z M0.5 3.5h6v6h-6z" fill="#fff" stroke="#000"/><path d="M3 1h7 M0 4h7" stroke="#000" stroke-width="1.2"/></svg>
  <svg class="a" style="left:665px;top:39px" width="9" height="9"><path d="M1 1l7 7 M8 1l-7 7" stroke="#000" stroke-width="1.8"/></svg>
  <!-- toolbar -->
  <div class="a" style="left:0;top:56px;width:682px;height:25px;background:linear-gradient(#f6f6f6,#f1f1f1)"></div>
  <div class="a" style="left:640px;top:56px;width:30px;height:25px;background:#fafafa"></div>
  <div class="a" style="left:0;top:80px;width:682px;height:1px;background:#e0e0e0"></div>
  <div class="a" style="left:6px;top:61px;width:2px;height:2px;background:#aaa;box-shadow:0 3px #aaa,0 6px #aaa,0 9px #aaa,0 12px #aaa"></div>
  <svg class="a" style="left:13px;top:61px" width="17" height="16" viewBox="0 0 17 16"><rect x="0.5" y="0.5" width="16" height="15" fill="#fff" stroke="#1a8a3a" stroke-dasharray="1.5 0.5"/><rect x="2" y="2" width="13" height="12" fill="none" stroke="#1a8a3a"/><path d="M4 3l9 10 M13 3l-9 10" stroke="#1a8a3a" stroke-width="2.2"/></svg>
  <svg class="a" style="left:36px;top:61px" width="17" height="16" viewBox="0 0 17 16"><rect x="1" y="0.5" width="15" height="10" fill="#e8e0f0" stroke="#c04060"/><rect x="1" y="0.5" width="15" height="2.5" fill="#e06080"/><path d="M1 2v12h14z" fill="#3a6ad0" opacity="0.85"/><rect x="1" y="13" width="15" height="3" fill="#d0a030"/><rect x="8" y="5" width="5" height="2.5" fill="#fff" stroke="#3a6ad0"/></svg>
  <svg class="a" style="left:58px;top:68px" width="7" height="4"><path d="M0 0h7l-3.5 4z" fill="#000"/></svg>
  <svg class="a" style="left:71px;top:61px" width="15" height="15" viewBox="0 0 15 15"><rect x="0.5" y="0.5" width="14" height="14" fill="#4a4ab0" stroke="#2a2a80"/><rect x="3" y="1" width="9" height="6" fill="#e0e8ff"/><rect x="4" y="10" width="7" height="4" fill="#fff"/><rect x="5" y="11" width="2" height="2" fill="#2a2a80"/></svg>
  <div class="a" style="left:92px;top:61px;width:1px;height:16px;background:#c8c8c8"></div>
  <svg class="a" style="left:102px;top:60px" width="10" height="17" viewBox="0 0 10 17"><path d="M2 0l5 10 M8 0l-5 10" stroke="#bbb" stroke-width="1.3"/><circle cx="2.5" cy="13" r="2.3" fill="none" stroke="#bbb" stroke-width="1.2"/><circle cx="7.5" cy="13" r="2.3" fill="none" stroke="#bbb" stroke-width="1.2"/></svg>
  <svg class="a" style="left:122px;top:62px" width="15" height="14" viewBox="0 0 15 14"><path d="M0.5 0.5h6l2 2v7h-8z M6.5 4.5h5l3 3v6h-8z" fill="#eee" stroke="#bbb"/><path d="M8 8h5 M8 10h5 M2 3h4 M2 5h4" stroke="#ccc"/></svg>
  <svg class="a" style="left:145px;top:61px" width="16" height="16" viewBox="0 0 16 16"><path d="M0.5 2.5h11v11h-11z" fill="#ddd" stroke="#bbb"/><path d="M3 0.5h5v3h-5z" fill="#ccc" stroke="#bbb"/><path d="M6.5 6.5h8v9h-8z" fill="#eee" stroke="#bbb"/></svg>
  <svg class="a" style="left:168px;top:61px" width="16" height="15" viewBox="0 0 16 15"><path d="M1 6h5v8h-5z M10 6h5v8h-5z M2 1h3v5h-3z M11 1h3v5h-3z M6 7h4v4h-4z" fill="#ddd" stroke="#bbb"/></svg>
  <div class="a" style="left:190px;top:61px;width:1px;height:16px;background:#c8c8c8"></div>
  <svg class="a" style="left:198px;top:61px" width="13" height="14" viewBox="0 0 13 14"><path d="M0 3l5-1-1 6z" fill="#2a6ad0"/><path d="M3 4.5c3-3 8-2.5 8 2 0 3-2 5-4 6.5" fill="none" stroke="#3a80e0" stroke-width="2.4"/></svg>
  <svg class="a" style="left:221px;top:61px" width="13" height="14" viewBox="0 0 13 14"><path d="M13 3l-5-1 1 6z" fill="#c4c4c4"/><path d="M10 4.5c-3-3-8-2.5-8 2 0 3 2 5 4 6.5" fill="none" stroke="#cfcfcf" stroke-width="2.4"/></svg>
  <div class="a" style="left:242px;top:61px;width:1px;height:16px;background:#c8c8c8"></div>
  <svg class="a" style="left:254px;top:63px" width="6" height="11"><path d="M0.5 0.5v10l5-5z" fill="#20b020" stroke="#108010" stroke-width="0.8"/></svg>
  <svg class="a" style="left:276px;top:64px" width="8" height="9"><rect x="0.5" y="0.5" width="2" height="8" fill="#c8d4ff" stroke="#2040b0"/><rect x="5.5" y="0.5" width="2" height="8" fill="#c8d4ff" stroke="#2040b0"/></svg>
  <svg class="a" style="left:298px;top:64px" width="9" height="9"><defs><linearGradient id="rg" x1="0" y1="0" x2="1" y2="1"><stop offset="0" stop-color="#b0c0ff"/><stop offset="1" stop-color="#2040c0"/></linearGradient></defs><rect x="0.5" y="0.5" width="8" height="8" fill="url(#rg)" stroke="#2040b0"/></svg>
  <svg class="a" style="left:317px;top:60px" width="17" height="16" viewBox="0 0 17 16"><path d="M1 1v11h11z" fill="#4060e0" stroke="#182890"/><path d="M3.5 6.5v3.5h3.5z" fill="#e8ecff"/><rect x="1.5" y="12.5" width="14" height="3" fill="#e0b030" stroke="#806010" stroke-width="0.8"/><path d="M4 13v1.5 M7 13v1.5 M10 13v1.5 M13 13v1.5" stroke="#806010" stroke-width="0.7"/><path d="M15 2l-9 9" stroke="#604020" stroke-width="3.4"/><path d="M15 2l-9 9" stroke="#f0d090" stroke-width="2"/><path d="M15.5 1.5l-1.5 1.5" stroke="#e04040" stroke-width="2.5"/></svg>
  <div class="a" style="left:340px;top:61px;width:1px;height:16px;background:#c8c8c8"></div>
  <svg class="a" style="left:347px;top:60px" width="16" height="16" viewBox="0 0 16 16"><path d="M1 1.5l4-1 6 5-4 1.5z" fill="#a0d0f8" stroke="#2050a0"/><path d="M1 5.5l4-1 6 5-4 1.5z" fill="#a0d0f8" stroke="#2050a0"/><path d="M1 9.5l4-1 6 5-4 1.5z" fill="#c8e4ff" stroke="#2050a0"/><path d="M13 0.5l2 2-2 2-2-2z M13 11l2 2-2 2-2-2z" fill="#f0c040" stroke="#a07010" stroke-width="0.6"/><path d="M9.5 7.5l3 0.5-1.5 2z" fill="#e03030"/></svg>
  <svg class="a" style="left:370px;top:62px" width="16" height="14" viewBox="0 0 16 14"><rect x="0.5" y="4.5" width="11" height="9" fill="#e4eef8" stroke="#3060a0"/><path d="M2 8.5h3 M6 8.5h4 M2 11h3 M6 11h4" stroke="#3060a0" stroke-width="0.8"/><path d="M4 4l3.5-3h4l3 2-4 3z" fill="#f0c850" stroke="#907020" stroke-width="0.8"/><path d="M12 0.5l3.5 3.5-2.5 1z" fill="#30a050"/></svg>
  <svg class="a" style="left:393px;top:60px" width="16" height="16" viewBox="0 0 16 16"><path d="M3 7.5h10v8h-10z" fill="#e8c040" stroke="#806010"/><path d="M1 6l2 1.5 M15 6l-2 1.5" stroke="#806010"/><path d="M5 9h6v4h-6z" fill="#f8e890"/><circle cx="2" cy="2" r="1.8" fill="#3050d0" stroke="#102080" stroke-width="0.5"/><path d="M9 1v4l-3-2z" fill="#40b040"/><rect x="12" y="0.5" width="3.5" height="3.5" fill="#e02020" stroke="#801010" stroke-width="0.5"/></svg>
  <svg class="a" style="left:419px;top:62px" width="13" height="12" viewBox="0 0 13 12"><path d="M1.5 11l7-7" stroke="#b8b8b8" stroke-width="2"/><path d="M7 1.5a2.5 2.5 0 1 0 3.5 3.5l2-0.5-1-2-2-1z" fill="#c8c8c8"/><path d="M3 1l9 9" stroke="#b8b8b8" stroke-width="2"/><path d="M1 0.5l2.5 1 0 2-2 0z" fill="#b8b8b8"/></svg>
  <svg class="a" style="left:440px;top:60px" width="16" height="16" viewBox="0 0 16 16"><path d="M0.8 9l7 3.5 7.2-3.5-7.2-3.5z" fill="#fff" stroke="#000" stroke-width="1.1"/><path d="M0.8 11l7 3.5 7.2-3.5 M0.8 13l7 3 7.2-3" fill="none" stroke="#000" stroke-width="1.1"/><path d="M8 0v6.5" stroke="#1060e0" stroke-width="2.4"/><path d="M4.5 4.5l3.5 3.5 3.5-3.5z" fill="#1060e0"/></svg>
  <svg class="a" style="left:462px;top:61px" width="14" height="15" viewBox="0 0 14 15"><path d="M4 9v-6.5a1 1 0 0 1 2 0v5 M6 7.5v-6.5a1 1 0 0 1 2 0v6.5 M8 7.5v-5.5a1 1 0 0 1 2 0v6 M10 8v-3a1 1 0 0 1 2 0v5c0 3-2 4.5-4.5 4.5s-3.5-1.5-4.5-3l-2-3a1 1 0 0 1 1.8-1l1.2 1.5" fill="#e8e8e8" stroke="#c4c4c4" stroke-width="1.1"/></svg>
  <svg class="a" style="left:485px;top:62px" width="15" height="12" viewBox="0 0 15 12"><path d="M7 3.5h8 M8 5.5h7 M8 7.5h7 M7 11h8" stroke="#b0b0b0" stroke-width="1.1"/><path d="M5 1h-3a1.5 1.5 0 0 0 0 3h3.5 M4 2.5l2 1.5-2 1.5" fill="none" stroke="#b8b8b8" stroke-width="1.4"/></svg>
  <svg class="a" style="left:509px;top:62px" width="14" height="14" viewBox="0 0 14 14"><path d="M0 0.8h1.5 M3 0.8h10 M6 3.8h7 M6 6.8h7 M6 9.8h7 M2 12.8h11" stroke="#b0b0b0" stroke-width="1.2"/></svg>
  <svg class="a" style="left:532px;top:61px" width="13" height="15" viewBox="0 0 13 15"><path d="M3 5h9 M3 8.5h9 M3 11.5h9 M1 14.3h11" stroke="#b0b0b0" stroke-width="1.2"/><path d="M4 3.5c0-2.5 6-2.5 6 0" fill="none" stroke="#b8b8b8" stroke-width="1.3"/><path d="M0.5 1.5l2.5 1.5-2.5 1.5z" fill="#b8b8b8"/></svg>
  <svg class="a" style="left:554px;top:60px" width="15" height="16" viewBox="0 0 15 16"><path d="M4 9v-6.5a1 1 0 0 1 2 0v5 M6 7.5v-6.5a1 1 0 0 1 2 0v6.5 M8 7.5v-5.5a1 1 0 0 1 2 0v6 M10 8v-3a1 1 0 0 1 2 0v5c0 3-2 4.5-4.5 4.5s-3.5-1.5-4.5-3l-2-3a1 1 0 0 1 1.8-1l1.2 1.5" fill="#fff" stroke="#000" stroke-width="1.1"/><path d="M4 15l9-9 M5 7l8 8" stroke="#e03030" stroke-width="1.8"/></svg>
  <svg class="a" style="left:577px;top:60px" width="17" height="17" viewBox="0 0 17 17"><defs><radialGradient id="hg" cx="0.4" cy="0.35" r="0.7"><stop offset="0" stop-color="#80b0f0"/><stop offset="1" stop-color="#2a60c0"/></radialGradient></defs><circle cx="8.5" cy="8.5" r="8" fill="url(#hg)"/><text x="8.5" y="13" font-size="12" font-weight="bold" font-family="Liberation Sans" fill="#fff" text-anchor="middle">?</text></svg>
  <div class="a" style="left:669px;top:57px;width:13px;height:26px;background:linear-gradient(90deg,#aaa,#c8c8c8);border-radius:3px 0 0 3px"></div>
  <svg class="a" style="left:671px;top:62px" width="9" height="18"><path d="M1 1l3 2-3 2z M5 1l3 2-3 2z" fill="#000"/><path d="M1 11h7 M1 13h7l-3.5 4z" stroke="#000" fill="#000"/></svg>

  <!-- project pane -->
  <div class="a" style="left:0;top:81px;width:208px;height:22px;background:#bfcfdc"></div>
  <div class="t" style="left:1px;top:84px;font-size:12px;color:#1a1a1a;letter-spacing:-0.094px">Project - VBAProject</div>
  <div class="a" style="left:188px;top:82px;width:20px;height:20px;background:#f4f4f4;border:1px solid #fff;border-right-color:#777;border-bottom-color:#777"></div>
  <svg class="a" style="left:192px;top:86px" width="12" height="12"><path d="M1 1l10 10 M11 1l-10 10" stroke="#000" stroke-width="1.8"/></svg>
  <div class="a" style="left:0;top:103px;width:208px;height:29px;background:#f4f4f4"></div>
  <svg class="a" style="left:8px;top:110px" width="15" height="13" viewBox="0 0 15 13"><rect x="0.5" y="0.5" width="14" height="12" fill="#e8f0ff" stroke="#4060c0"/><rect x="0.5" y="0.5" width="14" height="2.5" fill="#6080d0"/><path d="M3 5.5h3 M8 5.5h4 M3 8h3 M8 8h4 M3 10.5h3 M8 10.5h4" stroke="#e04040"/></svg>
  <svg class="a" style="left:30px;top:110px" width="15" height="13" viewBox="0 0 15 13"><rect x="0.5" y="0.5" width="14" height="12" fill="#e8f0ff" stroke="#4060c0"/><rect x="0.5" y="0.5" width="14" height="2.5" fill="#6080d0"/><path d="M2 5.5h4 M2 9h4" stroke="#333"/><rect x="7.5" y="4.5" width="5" height="2.5" fill="#fff" stroke="#333"/><rect x="7.5" y="8" width="5" height="2.5" fill="#fff" stroke="#333"/></svg>
  <div class="a" style="left:53px;top:109px;width:1px;height:17px;background:#c8c8c8"></div>
  <div class="a" style="left:57px;top:106px;width:23px;height:22px;background:#e5f1fb;border:1px solid #3399ff"></div>
  <svg class="a" style="left:60px;top:110px" width="17" height="13" viewBox="0 0 18 14"><path d="M0.5 2.5h6l2 2h9v9h-17z" fill="#e8c050" stroke="#a07820"/><path d="M0.5 5.5h17" stroke="#f8e090"/></svg>
  <div class="a" style="left:196px;top:105px;width:12px;height:26px;background:linear-gradient(90deg,#aaa,#c8c8c8);border-radius:3px 0 0 3px"></div>
  <svg class="a" style="left:198px;top:118px" width="9" height="8"><path d="M1 1h7 M1 3h7l-3.5 4z" stroke="#000" fill="#000"/></svg>
  <!-- tree -->
  <div class="a" style="left:1px;top:132px;width:207px;height:375px;background:#fff;border-top:2px solid #777;border-left:1px solid #777"></div>
  <div class="a" style="left:13px;top:147px;width:1px;height:27px;background:repeating-linear-gradient(#888 0 1px,transparent 1px 2px)"></div>
<div class="a" style="left:32px;top:179px;width:1px;height:75px;background:repeating-linear-gradient(#888 0 1px,transparent 1px 2px)"></div>
<div class="a" style="left:51px;top:195px;width:1px;height:43px;background:repeating-linear-gradient(#888 0 1px,transparent 1px 2px)"></div>
<div class="a" style="left:51px;top:259px;width:1px;height:11px;background:repeating-linear-gradient(#888 0 1px,transparent 1px 2px)"></div>
<div class="a" style="left:9px;top:138px;width:9px;height:9px;background:#f4f4f4;border:1px solid #999"></div><div class="a" style="left:11px;top:142px;width:5px;height:1px;background:#1a1a6a"></div><div class="a" style="left:13px;top:140px;width:1px;height:5px;background:#1a1a6a"></div>
<div class="a" style="left:19px;top:142px;width:5px;height:1px;background:repeating-linear-gradient(90deg,#888 0 1px,transparent 1px 2px)"></div>
<svg class="a" style="left:24px;top:134px" width="16" height="16" viewBox="0 0 16 16"><path d="M2.5 3.5v5l3 3h4 M2.5 3.5h3.5l4 4.5v5" fill="none" stroke="#000" stroke-width="1.5"/><path d="M3.5 5l2 1.5 M5 8l2 1 M9 11l3 2" stroke="#20e0f0" stroke-width="1.3"/><path d="M0.8 12l2.5-2 M0.8 12l6 3.5 6-2.5 2.5-1-2-1.5" fill="none" stroke="#000" stroke-width="1.5"/><path d="M13 2l-2.5 2.5 2 3 M10 7.5l2.5 4" fill="none" stroke="#000" stroke-width="0.9"/><ellipse cx="13.3" cy="2" rx="1.8" ry="1.3" fill="#10e010" stroke="#000" stroke-width="0.8"/><ellipse cx="10" cy="4.5" rx="1.8" ry="1.2" fill="#f0f000" stroke="#000" stroke-width="0.8"/><ellipse cx="12.5" cy="7" rx="1.2" ry="1.8" fill="#f020f0" stroke="#000" stroke-width="0.8"/></svg>
<div class="t" style="left:45px;top:137px;font-size:11.5px;font-weight:bold;color:#000;letter-spacing:-0.111px">Solver (SOLVER.XLAM)</div>
<div class="a" style="left:9px;top:154px;width:9px;height:9px;background:#f4f4f4;border:1px solid #999"></div><div class="a" style="left:11px;top:158px;width:5px;height:1px;background:#1a1a6a"></div><div class="a" style="left:13px;top:156px;width:1px;height:5px;background:#1a1a6a"></div>
<div class="a" style="left:19px;top:158px;width:5px;height:1px;background:repeating-linear-gradient(90deg,#888 0 1px,transparent 1px 2px)"></div>
<svg class="a" style="left:24px;top:150px" width="16" height="16" viewBox="0 0 16 16"><path d="M2.5 3.5v5l3 3h4 M2.5 3.5h3.5l4 4.5v5" fill="none" stroke="#000" stroke-width="1.5"/><path d="M3.5 5l2 1.5 M5 8l2 1 M9 11l3 2" stroke="#20e0f0" stroke-width="1.3"/><path d="M0.8 12l2.5-2 M0.8 12l6 3.5 6-2.5 2.5-1-2-1.5" fill="none" stroke="#000" stroke-width="1.5"/><path d="M13 2l-2.5 2.5 2 3 M10 7.5l2.5 4" fill="none" stroke="#000" stroke-width="0.9"/><ellipse cx="13.3" cy="2" rx="1.8" ry="1.3" fill="#10e010" stroke="#000" stroke-width="0.8"/><ellipse cx="10" cy="4.5" rx="1.8" ry="1.2" fill="#f0f000" stroke="#000" stroke-width="0.8"/><ellipse cx="12.5" cy="7" rx="1.2" ry="1.8" fill="#f020f0" stroke="#000" stroke-width="0.8"/></svg>
<div class="t" style="left:45px;top:153px;font-size:11.5px;font-weight:bold;color:#000;letter-spacing:-0.259px">VBAProject (FUNCRES.XLAM)</div>
<div class="a" style="left:9px;top:170px;width:9px;height:9px;background:#f4f4f4;border:1px solid #999"></div><div class="a" style="left:11px;top:174px;width:5px;height:1px;background:#1a1a6a"></div>
<div class="a" style="left:19px;top:174px;width:5px;height:1px;background:repeating-linear-gradient(90deg,#888 0 1px,transparent 1px 2px)"></div>
<svg class="a" style="left:24px;top:166px" width="16" height="16" viewBox="0 0 16 16"><path d="M2.5 3.5v5l3 3h4 M2.5 3.5h3.5l4 4.5v5" fill="none" stroke="#000" stroke-width="1.5"/><path d="M3.5 5l2 1.5 M5 8l2 1 M9 11l3 2" stroke="#20e0f0" stroke-width="1.3"/><path d="M0.8 12l2.5-2 M0.8 12l6 3.5 6-2.5 2.5-1-2-1.5" fill="none" stroke="#000" stroke-width="1.5"/><path d="M13 2l-2.5 2.5 2 3 M10 7.5l2.5 4" fill="none" stroke="#000" stroke-width="0.9"/><ellipse cx="13.3" cy="2" rx="1.8" ry="1.3" fill="#10e010" stroke="#000" stroke-width="0.8"/><ellipse cx="10" cy="4.5" rx="1.8" ry="1.2" fill="#f0f000" stroke="#000" stroke-width="0.8"/><ellipse cx="12.5" cy="7" rx="1.2" ry="1.8" fill="#f020f0" stroke="#000" stroke-width="0.8"/></svg>
<div class="t" style="left:45px;top:169px;font-size:11.5px;font-weight:bold;color:#000;letter-spacing:0.094px">VBAProject (New_File.xlsx)</div>
<div class="a" style="left:28px;top:186px;width:9px;height:9px;background:#f4f4f4;border:1px solid #999"></div><div class="a" style="left:30px;top:190px;width:5px;height:1px;background:#1a1a6a"></div>
<div class="a" style="left:38px;top:190px;width:7px;height:1px;background:repeating-linear-gradient(90deg,#888 0 1px,transparent 1px 2px)"></div>
<svg class="a" style="left:45px;top:183px" width="15" height="13" viewBox="0 0 15 13"><path d="M0.5 2.5l2-2h4l1 2h7v9h-14z" fill="#f8f0b0" stroke="#777"/><path d="M1 5h13v6h-13z" fill="#f0e040" opacity="0.9"/><path d="M3 5h11l-1 7h-12z" fill="#f4e878" stroke="#777" stroke-width="0.8"/></svg>
<div class="t" style="left:63px;top:185px;font-size:11px;color:#000;letter-spacing:-0.1px">Microsoft Excel Objects</div>
<div class="a" style="left:52px;top:206px;width:11px;height:1px;background:repeating-linear-gradient(90deg,#888 0 1px,transparent 1px 2px)"></div>
<div class="a" style="left:80px;top:199px;width:84px;height:15px;background:#f0f0f0"></div>
<svg class="a" style="left:63px;top:198px" width="16" height="16" viewBox="0 0 16 16"><path d="M4.5 0.5h7l4 4v11h-11z" fill="#fff" stroke="#000"/><path d="M0.5 3.5h10v9h-10z M0.5 6.5h10 M0.5 9.5h10 M4 3.5v9 M7 3.5v9" fill="#fff" stroke="#000" stroke-width="0.9"/></svg>
<div class="t" style="left:82px;top:201px;font-size:11px;color:#000;letter-spacing:-0.1px">Sheet1 (Sheet1)</div>
<div class="a" style="left:52px;top:222px;width:11px;height:1px;background:repeating-linear-gradient(90deg,#888 0 1px,transparent 1px 2px)"></div>
<svg class="a" style="left:63px;top:214px" width="16" height="16" viewBox="0 0 16 16"><path d="M4.5 0.5h7l4 4v11h-11z" fill="#fff" stroke="#000"/><path d="M0.5 3.5h10v9h-10z M0.5 6.5h10 M0.5 9.5h10 M4 3.5v9 M7 3.5v9" fill="#fff" stroke="#000" stroke-width="0.9"/></svg>
<div class="t" style="left:82px;top:217px;font-size:11px;color:#000;letter-spacing:-0.1px">Sheet2 (Sheet2)</div>
<div class="a" style="left:52px;top:238px;width:11px;height:1px;background:repeating-linear-gradient(90deg,#888 0 1px,transparent 1px 2px)"></div>
<svg class="a" style="left:63px;top:230px" width="16" height="16" viewBox="0 0 16 16"><path d="M4.5 0.5h7l4 4v11h-11z" fill="#fff" stroke="#000"/><path d="M11.5 0.5v4h4" fill="none" stroke="#000"/><path d="M1 5l6 6 M7 5l-6 6" stroke="#20a040" stroke-width="2"/></svg>
<div class="t" style="left:82px;top:233px;font-size:11px;color:#000;letter-spacing:-0.1px">ThisWorkbook</div>
<div class="a" style="left:28px;top:250px;width:9px;height:9px;background:#f4f4f4;border:1px solid #999"></div><div class="a" style="left:30px;top:254px;width:5px;height:1px;background:#1a1a6a"></div>
<div class="a" style="left:38px;top:254px;width:7px;height:1px;background:repeating-linear-gradient(90deg,#888 0 1px,transparent 1px 2px)"></div>
<svg class="a" style="left:45px;top:247px" width="15" height="13" viewBox="0 0 15 13"><path d="M0.5 2.5l2-2h4l1 2h7v9h-14z" fill="#f8f0b0" stroke="#777"/><path d="M1 5h13v6h-13z" fill="#f0e040" opacity="0.9"/><path d="M3 5h11l-1 7h-12z" fill="#f4e878" stroke="#777" stroke-width="0.8"/></svg>
<div class="t" style="left:63px;top:249px;font-size:11px;color:#000;letter-spacing:-0.1px">Modules</div>
<div class="a" style="left:52px;top:270px;width:11px;height:1px;background:repeating-linear-gradient(90deg,#888 0 1px,transparent 1px 2px)"></div>
<svg class="a" style="left:63px;top:262px" width="16" height="16" viewBox="0 0 16 16"><path d="M2.5 11l6-7 M6 13l6-9 M8 4l5 8 M2.5 11l10 1.5" stroke="#000" stroke-width="1.1"/><ellipse cx="2.5" cy="11" rx="2" ry="1.5" fill="#f020f0" stroke="#000" stroke-width="0.6"/><ellipse cx="6.5" cy="13" rx="2.2" ry="1.4" fill="#20c040" stroke="#000" stroke-width="0.6"/><ellipse cx="12.5" cy="13" rx="2" ry="1.6" fill="#20d0e0" stroke="#000" stroke-width="0.6"/><ellipse cx="8.5" cy="4" rx="1.6" ry="2.2" fill="#f0f020" stroke="#000" stroke-width="0.6"/><ellipse cx="12.5" cy="4" rx="1.6" ry="2.2" fill="#f020f0" stroke="#000" stroke-width="0.6"/></svg>
<div class="t" style="left:82px;top:265px;font-size:11px;color:#000;letter-spacing:-0.1px">Module1</div>

  <!-- properties pane -->
  <div class="a" style="left:0;top:515px;width:208px;height:22px;background:#bfcfdc"></div>
  <div class="t" style="left:1px;top:518px;font-size:11.5px;color:#1a1a1a;letter-spacing:-0.058px">Properties - Sheet1</div>
  <div class="a" style="left:188px;top:516px;width:20px;height:21px;background:#f4f4f4;border:1px solid #fff;border-right-color:#777;border-bottom-color:#777"></div>
  <svg class="a" style="left:192px;top:520px" width="12" height="12"><path d="M1 1l10 10 M11 1l-10 10" stroke="#000" stroke-width="1.8"/></svg>
  <div class="a" style="left:1px;top:541px;width:206px;height:19px;background:#fff;border:1px solid #777"></div>
  <div class="t" style="left:4px;top:545px;font-size:11.5px;color:#000"><b>Sheet1</b> Worksheet</div>
  <svg class="a" style="left:193px;top:548px" width="10" height="6"><path d="M0.5 0.5l4.5 4.5 4.5-4.5" fill="none" stroke="#555"/></svg>
  <div class="a" style="left:1px;top:563px;width:65px;height:21px;background:#fff;border:1px solid #dcdcdc;border-bottom:none"></div>
  <div class="t" style="left:7px;top:567px;font-size:11.5px;color:#000;letter-spacing:-0.272px">Alphabetic</div>
  <div class="a" style="left:65px;top:565px;width:67px;height:19px;background:#f0f0f0;border:1px solid #dcdcdc;border-bottom:none"></div>
  <div class="t" style="left:69px;top:570px;font-size:11.5px;color:#000;letter-spacing:-0.320px">Categorized</div>
  <div class="a" style="left:1px;top:583px;width:207px;height:142px;background:#fff;border:1px solid #dcdcdc"></div>
  <div class="a" style="left:4px;top:585px;width:202px;height:137px;background:#fff;border:1px solid #a0a0a0"></div>
  <div class="a" style="left:6px;top:587px;width:199px;height:133px;background:#fff;border:1px solid #6d6d6d;border-right:none;border-bottom:none"></div>
  <div class="a" style="left:7px;top:587px;width:92px;height:15px;background:#0078d7"></div>
<div class="a" style="left:7px;top:602px;width:179px;height:1px;background:#d8d8d8"></div>
<div class="t" style="left:7px;top:590px;font-size:11px;color:#fff;letter-spacing:-0.3px;width:92px;overflow:hidden">(Name)</div>
<div class="t" style="left:101px;top:590px;font-size:11px;color:#000">Sheet1</div>
<div class="a" style="left:7px;top:618px;width:179px;height:1px;background:#d8d8d8"></div>
<div class="t" style="left:7px;top:606px;font-size:11px;color:#000;letter-spacing:-0.3px;width:92px;overflow:hidden">DisplayPageBreaks</div>
<div class="t" style="left:101px;top:606px;font-size:11px;color:#000">False</div>
<div class="a" style="left:7px;top:634px;width:179px;height:1px;background:#d8d8d8"></div>
<div class="t" style="left:7px;top:622px;font-size:11px;color:#000;letter-spacing:-0.3px;width:92px;overflow:hidden">DisplayRightToLeft</div>
<div class="t" style="left:101px;top:622px;font-size:11px;color:#000">False</div>
<div class="a" style="left:7px;top:650px;width:179px;height:1px;background:#d8d8d8"></div>
<div class="t" style="left:7px;top:638px;font-size:11px;color:#000;letter-spacing:-0.3px;width:92px;overflow:hidden">EnableAutoFilter</div>
<div class="t" style="left:101px;top:638px;font-size:11px;color:#000">False</div>
<div class="a" style="left:7px;top:666px;width:179px;height:1px;background:#d8d8d8"></div>
<div class="t" style="left:7px;top:654px;font-size:11px;color:#000;letter-spacing:-0.3px;width:92px;overflow:hidden">EnableCalculation</div>
<div class="t" style="left:101px;top:654px;font-size:11px;color:#000">True</div>
<div class="a" style="left:7px;top:682px;width:179px;height:1px;background:#d8d8d8"></div>
<div class="t" style="left:7px;top:670px;font-size:11px;color:#000;letter-spacing:-0.3px;width:92px;overflow:hidden">EnableFormatCond</div>
<div class="t" style="left:101px;top:670px;font-size:11px;color:#000">True</div>
<div class="a" style="left:7px;top:698px;width:179px;height:1px;background:#d8d8d8"></div>
<div class="t" style="left:7px;top:686px;font-size:11px;color:#000;letter-spacing:-0.3px;width:92px;overflow:hidden">EnableOutlining</div>
<div class="t" style="left:101px;top:686px;font-size:11px;color:#000">False</div>
<div class="a" style="left:7px;top:714px;width:179px;height:1px;background:#d8d8d8"></div>
<div class="t" style="left:7px;top:702px;font-size:11px;color:#000;letter-spacing:-0.3px;width:92px;overflow:hidden">EnablePivotTable</div>
<div class="t" style="left:101px;top:702px;font-size:11px;color:#000">False</div>
<div class="a" style="left:7px;top:730px;width:179px;height:1px;background:#d8d8d8"></div>
<div class="t" style="left:7px;top:718px;font-size:11px;color:#000;letter-spacing:-0.3px;width:92px;overflow:hidden">EnableSelection</div>
<div class="t" style="left:101px;top:718px;font-size:11px;color:#000">0 - xlNoRestrictions</div>
<div class="a" style="left:99px;top:587px;width:1px;height:134px;background:#d8d8d8"></div>
<div class="a" style="left:186px;top:587px;width:17px;height:134px;background:#f0f0f0"></div>
<div class="a" style="left:187px;top:604px;width:15px;height:60px;background:#cdcdcd"></div>
<svg class="a" style="left:189px;top:593px" width="10" height="6"><path d="M1 5l4-4 4 4" fill="none" stroke="#555" stroke-width="2"/></svg>
<svg class="a" style="left:189px;top:708px" width="10" height="6"><path d="M1 1l4 4 4-4" fill="none" stroke="#555" stroke-width="2"/></svg>
<div class="a" style="left:5px;top:719px;width:200px;height:7px;background:#fff;border-top:1px solid #fff"></div>
<div class="a" style="left:4px;top:720px;width:202px;height:1px;background:#a0a0a0"></div>

  <!-- code window -->
  <div class="a" style="left:215px;top:81px;width:466px;height:570px;background:#f0f0f0;border-top:2px solid #777;border-left:2px solid #777;border-right:1px solid #fff;border-bottom:1px solid #fff"></div>
  <div class="a" style="left:227px;top:85px;width:216px;height:22px;background:#fff;border:1px solid #777"></div>
  <div class="t" style="left:231px;top:90px;font-size:11.5px;font-weight:bold;color:#000;letter-spacing:0.000px">(General)</div>
  <svg class="a" style="left:429px;top:93px" width="10" height="6"><path d="M0.5 0.5l4.5 4.5 4.5-4.5" fill="none" stroke="#555" stroke-width="1.1"/></svg>
  <div class="a" style="left:453px;top:85px;width:216px;height:22px;background:#fff;border:1px solid #777"></div>
  <div class="t" style="left:457px;top:90px;font-size:11.5px;font-weight:bold;color:#000;letter-spacing:-0.106px">ButtonRefreshData</div>
  <svg class="a" style="left:655px;top:93px" width="10" height="6"><path d="M0.5 0.5l4.5 4.5 4.5-4.5" fill="none" stroke="#555" stroke-width="1.1"/></svg>
  <div class="a" style="left:217px;top:109px;width:462px;height:2px;background:#777"></div>
  <div class="a" style="left:217px;top:111px;width:22px;height:520px;background:#efefef"></div>
  <div class="a" style="left:217px;top:109px;width:1px;height:540px;background:#9a9a9a"></div>
  <div class="a" style="left:218px;top:109px;width:1px;height:522px;background:#696969"></div>
  <div class="a" style="left:239px;top:111px;width:1px;height:520px;background:#000"></div>
  <div class="a" style="left:240px;top:111px;width:420px;height:521px;background:#fff"></div>
  <div class="t" style="left:251px;top:114px;font-family:'Liberation Mono';font-size:15px;line-height:19px;color:#000;white-space:pre"><span style="color:#00007f">Sub</span> ButtonRefreshData()
    ThisWorkbook.RefreshAll
    Sheet1.Activate
<span style="color:#00007f">End Sub</span></div>
  <!-- code vscroll -->
  <div class="a" style="left:660px;top:112px;width:17px;height:521px;background:#f0f0f0"></div>
  <div class="a" style="left:660px;top:112px;width:17px;height:6px;background:#f0f0f0;border:1px solid #fff;border-right-color:#777;border-bottom-color:#777"></div>
  <svg class="a" style="left:664px;top:125px" width="10" height="6"><path d="M1 5l4-4 4 4" fill="none" stroke="#555" stroke-width="2"/></svg>
  <div class="a" style="left:661px;top:135px;width:15px;height:480px;background:#cdcdcd"></div>
  <svg class="a" style="left:664px;top:621px" width="10" height="6"><path d="M1 1l4 4 4-4" fill="none" stroke="#555" stroke-width="2"/></svg>
  <!-- code hscroll -->
  <div class="a" style="left:217px;top:631px;width:462px;height:18px;background:#f0f0f0"></div>
  <div class="a" style="left:218px;top:631px;width:18px;height:17px;background:#f4f4f4;border-top:1px solid #fff;border-left:1px solid #fff;border-right:2px solid #6d6d6d;border-bottom:2px solid #6d6d6d"></div>
  <svg class="a" style="left:222px;top:633px" width="11" height="6"><path d="M3 0.5h8 M0 4.5h11" stroke="#000"/></svg>
  <div class="a" style="left:236px;top:631px;width:16px;height:17px;background:#f4f4f4;border-top:2px solid #6d6d6d;border-left:2px solid #6d6d6d"></div>
  <svg class="a" style="left:239px;top:634px" width="11" height="11"><path d="M0 1.5h11 M3 3.5h8 M3 5.5h8 M3 7.5h8 M0 9.5h11" stroke="#000"/></svg>
  <svg class="a" style="left:257px;top:635px" width="7" height="9"><path d="M5.5 1l-3.5 3.5 3.5 3.5" fill="none" stroke="#555" stroke-width="2"/></svg>
  <div class="a" style="left:270px;top:632px;width:17px;height:15px;background:#cdcdcd"></div>
  <svg class="a" style="left:649px;top:635px" width="7" height="9"><path d="M1.5 1l3.5 3.5-3.5 3.5" fill="none" stroke="#555" stroke-width="2"/></svg>
  <svg class="a" style="left:666px;top:638px" width="9" height="9"><path d="M6 0h2v2h-2z M3 3h2v2h-2z M6 3h2v2h-2z M0 6h2v2h-2z M3 6h2v2h-2z M6 6h2v2h-2z" fill="#bbb"/></svg>

  <!-- immediate -->
  <div class="a" style="left:215px;top:658px;width:178px;height:22px;background:#bfcfdc"></div>
  <div class="t" style="left:216px;top:660px;font-size:12px;color:#1a1a1a;letter-spacing:0.108px">Immediate</div>
  <div class="a" style="left:373px;top:659px;width:20px;height:20px;background:#f4f4f4;border:1px solid #fff;border-right:2px solid #777;border-bottom:2px solid #777"></div>
  <svg class="a" style="left:376px;top:662px" width="12" height="12"><path d="M1 1l10 10 M11 1l-10 10" stroke="#000" stroke-width="1.8"/></svg>
  <div class="a" style="left:215px;top:680px;width:178px;height:45px;background:#fff;border-top:2px solid #777;border-left:2px solid #777"></div>
  <div class="a" style="left:375px;top:682px;width:17px;height:42px;background:#f0f0f0"></div>
  <div class="a" style="left:392px;top:680px;width:1px;height:46px;background:#d8d8d8"></div>
  <svg class="a" style="left:379px;top:689px" width="10" height="6"><path d="M1 5l4-4 4 4" fill="none" stroke="#555" stroke-width="2"/></svg>
  <svg class="a" style="left:379px;top:700px" width="10" height="6"><path d="M1 1l4 4 4-4" fill="none" stroke="#555" stroke-width="2"/></svg>
  <div class="a" style="left:217px;top:708px;width:158px;height:16px;background:#f0f0f0"></div>
  <div class="a" style="left:215px;top:724px;width:178px;height:2px;background:#d8d8d8"></div>
  <svg class="a" style="left:222px;top:711px" width="6" height="10"><path d="M5 1l-4 4 4 4" fill="none" stroke="#555" stroke-width="2"/></svg>
  <div class="a" style="left:234px;top:709px;width:16px;height:15px;background:#cdcdcd"></div>
  <svg class="a" style="left:365px;top:711px" width="6" height="10"><path d="M1 1l4 4-4 4" fill="none" stroke="#555" stroke-width="2"/></svg>

  <!-- watches -->
  <div class="a" style="left:400px;top:658px;width:282px;height:22px;background:#bfcfdc"></div>
  <div class="t" style="left:400px;top:660px;font-size:12px;color:#1a1a1a;letter-spacing:0.107px">Watches</div>
  <div class="a" style="left:660px;top:659px;width:20px;height:20px;background:#f4f4f4;border:1px solid #fff;border-right:2px solid #777;border-bottom:2px solid #777"></div>
  <svg class="a" style="left:663px;top:662px" width="12" height="12"><path d="M1 1l10 10 M11 1l-10 10" stroke="#000" stroke-width="1.8"/></svg>
  <div class="a" style="left:400px;top:680px;width:282px;height:45px;background:#fff;border-top:2px solid #777;border-left:2px solid #777;border-bottom:1px solid #d8d8d8"></div>
  <div class="a" style="left:402px;top:682px;width:65px;height:17px;background:#f0f0f0;border:1px solid #fff;border-right-color:#777;border-bottom-color:#777"></div>
<div class="t" style="left:406px;top:685px;font-size:11.5px;color:#000">Expression</div>
<div class="a" style="left:468px;top:682px;width:65px;height:17px;background:#f0f0f0;border:1px solid #fff;border-right-color:#777;border-bottom-color:#777"></div>
<div class="t" style="left:472px;top:685px;font-size:11.5px;color:#000">Value</div>
<div class="a" style="left:534px;top:682px;width:64px;height:17px;background:#f0f0f0;border:1px solid #fff;border-right-color:#777;border-bottom-color:#777"></div>
<div class="t" style="left:538px;top:685px;font-size:11.5px;color:#000">Type</div>
<div class="a" style="left:599px;top:682px;width:63px;height:17px;background:#f0f0f0;border:1px solid #fff;border-right-color:#777;border-bottom-color:#777"></div>
<div class="t" style="left:603px;top:685px;font-size:11.5px;color:#000">Context</div>
  <div class="a" style="left:662px;top:682px;width:18px;height:43px;background:#f0f0f0"></div>
  <svg class="a" style="left:666px;top:690px" width="10" height="6"><path d="M1 5l4-4 4 4" fill="none" stroke="#555" stroke-width="2"/></svg>
  <svg class="a" style="left:666px;top:713px" width="10" height="6"><path d="M1 1l4 4 4-4" fill="none" stroke="#555" stroke-width="2"/></svg>
  <div class="a" style="left:0;top:726px;width:682px;height:1px;background:#555"></div>
  <div class="a" style="left:681px;top:0;width:1px;height:727px;background:#555"></div>
  <div class="a" style="left:0;top:-1px;width:682px;height:1px;background:#2a2a2a"></div>
</div>
<div class="a" style="left:683px;top:0;width:683px;height:1px;background:#2a2a2a"></div><div class="a" style="left:683px;top:0;width:1px;height:728px;background:#3a3a3a"></div><div class="a" style="left:1365px;top:0;width:1px;height:728px;background:#3a3a3a"></div><div class="a" style="left:683px;top:727px;width:683px;height:1px;background:#3a3a3a"></div><svg class="a" style="left:664px;top:499px" width="14" height="21" viewBox="0 0 14 21"><path d="M1 1v16l4-3.5 3 5.5 2.5-1-3-5.5h5.5z" fill="#fff" stroke="#000" stroke-width="1" stroke-linejoin="round"/></svg></body></html>
